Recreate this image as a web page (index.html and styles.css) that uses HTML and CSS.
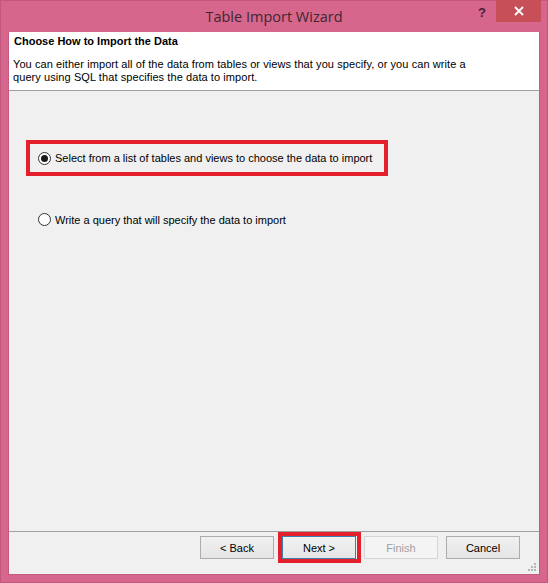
FILE: index.html
```html
<!DOCTYPE html>
<html>
<head>
<meta charset="utf-8">
<link rel="stylesheet" href="styles.css">
</head>
<body>
<div class="window">
  <div class="titlebar">
    <div class="title">Table Import Wizard</div>
    <div class="help">?</div>
    <div class="close">
      <svg width="10" height="10" viewBox="0 0 10 10"><path d="M1 1 L9 9 M9 1 L1 9" stroke="#fff" stroke-width="1.8" fill="none"/></svg>
    </div>
  </div>
  <div class="client">
    <div class="header">
      <div class="h-title">Choose How to Import the Data</div>
      <div class="h-desc">You can either import all of the data from tables or views that you specify, or you can write a<br>query using SQL that specifies the data to import.</div>
    </div>
    <div class="content">
      <div class="highlight opt1">
        <label class="radio"><span class="dot checked"></span><span>Select from a list of tables and views to choose the data to import</span></label>
      </div>
      <label class="radio opt2"><span class="dot"></span><span>Write a query that will specify the data to import</span></label>
    </div>
    <div class="footer">
      <div class="btn">&lt; Back</div>
      <div class="highlight btnwrap"><div class="btn default">Next &gt;</div></div>
      <div class="btn disabled">Finish</div>
      <div class="btn">Cancel</div>
      <svg class="grip" width="8" height="8" viewBox="0 0 8 8">
        <rect x="6" y="0" width="2" height="2" fill="#b4b4b4"/>
        <rect x="3" y="3" width="2" height="2" fill="#b4b4b4"/>
        <rect x="6" y="3" width="2" height="2" fill="#b4b4b4"/>
        <rect x="0" y="6" width="2" height="2" fill="#b4b4b4"/>
        <rect x="3" y="6" width="2" height="2" fill="#b4b4b4"/>
        <rect x="6" y="6" width="2" height="2" fill="#b4b4b4"/>
      </svg>
    </div>
  </div>
</div>
</body>
</html>
```
FILE: styles.css
```css
html, body {
  margin: 0;
  padding: 0;
}
body {
  width: 548px;
  height: 583px;
  overflow: hidden;
  font-family: "Liberation Sans", Arial, sans-serif;
  font-size: 11px;
  color: #000;
}
.window {
  box-sizing: border-box;
  width: 548px;
  height: 583px;
  background: #d6668c;
  border: 1px solid #c2587d;
  display: flex;
  flex-direction: column;
}
.titlebar {
  position: relative;
  height: 31px;
  flex: none;
}
.title {
  text-align: center;
  font-family: "Open Sans", "Noto Sans", sans-serif;
  font-size: 14.5px;
  line-height: 31px;
  color: #3f2631;
}
.help {
  position: absolute;
  left: 477px;
  top: 4px;
  font-family: "Liberation Sans", Arial, sans-serif;
  font-weight: bold;
  font-size: 13px;
  color: #4a1f31;
}
.close {
  position: absolute;
  left: 495px;
  top: -1px;
  width: 45px;
  height: 22px;
  background: #c74f58;
  display: flex;
  align-items: center;
  justify-content: center;
}
.client {
  flex: 1;
  margin: 0 7px 7px 7px;
  background: #f0f0f0;
  border: 1px solid #c45a80;
  border-top: none;
  display: flex;
  flex-direction: column;
}
.header {
  background: #fff;
  border-top: 1px solid #fff;
  border-bottom: 1px solid #a0a0a0;
  height: 57px;
  box-sizing: content-box;
  padding: 0 0 0 4px;
}
.h-title {
  font-weight: bold;
  line-height: 13px;
  margin-top: 2px;
  padding-left: 1px;
}
.h-desc {
  line-height: 13px;
  margin-top: 10px;
  letter-spacing: 0.08px;
}
.content {
  flex: 1;
  position: relative;
  padding: 49px 0 0 17px;
}
.highlight {
  border: 4px solid #e3202b;
}
.opt1 {
  width: 354px;
  height: 28px;
  box-sizing: content-box;
  display: flex;
  align-items: center;
}
.radio {
  display: flex;
  align-items: center;
  gap: 4px;
  white-space: nowrap;
}
.opt1 .radio {
  padding-left: 8px;
}
.opt2 {
  margin-top: 37px;
  padding-left: 12px;
}
.dot {
  box-sizing: border-box;
  width: 13px;
  height: 13px;
  border: 1px solid #333;
  border-radius: 50%;
  background: #fff;
  position: relative;
  flex: none;
}
.dot.checked::after {
  content: "";
  position: absolute;
  left: 2px;
  top: 2px;
  width: 7px;
  height: 7px;
  border-radius: 50%;
  background: #1a1a1a;
}
.footer {
  flex: none;
  box-sizing: border-box;
  height: 43px;
  border-top: 1px solid #a0a0a0;
  display: flex;
  align-items: flex-start;
  padding: 4px 0 0 191px;
  position: relative;
  gap: 8px;
}
.btn {
  box-sizing: border-box;
  width: 74px;
  height: 23px;
  border: 1px solid #acacac;
  background: linear-gradient(#f0f0f0, #e5e5e5);
  display: flex;
  align-items: center;
  justify-content: center;
  font-size: 11px;
}
.btnwrap {
  margin: -4px -5px 0 -4px;
  padding: 0 1px 0 0;
  height: 23px;
}
.btn.default {
  border: 1px solid #3c7fb1;
  background: linear-gradient(#f2f2f2, #e6e6e6);
}
.btn.disabled {
  border-color: #d5d5d5;
  background: #f4f4f4;
  color: #a0a0a0;
}
.grip {
  position: absolute;
  right: 3px;
  bottom: 3px;
}
```
